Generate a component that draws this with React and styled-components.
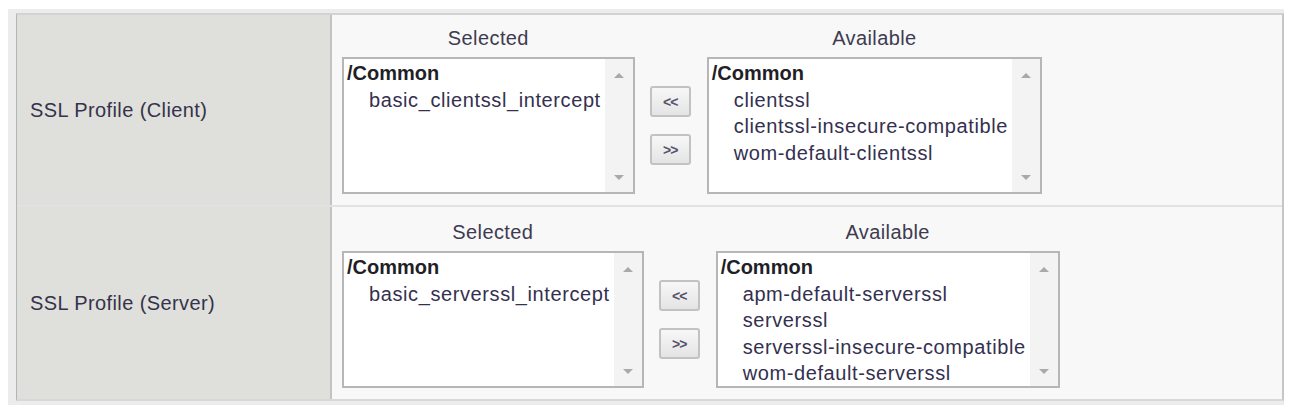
import styled, { createGlobalStyle } from "styled-components";

const GlobalStyle = createGlobalStyle`
    body {
        margin: 0;
        background: #ffffff;
        font-family: "Liberation Sans", Arial, sans-serif;
    }
`

const Frame = styled.div`
    margin: 9px 0 0 8px;
    width: 1276px;
    box-sizing: border-box;
    background: #ececec;
    padding: 4px 0 4px 8px;
`

const Table = styled.div`
    border-left: 1px solid #b4b4b4;
    border-right: 2px solid #c6c6c6;
    border-top: 2px solid #d2d2d2;
    border-bottom: 2px solid #d8d8d8;
`

const Row = styled.div`
    display: grid;
    grid-template-columns: 315px 1fr;
    height: ${p => p.h}px;
    & + & {
        border-top: 2px solid #e2e2e2;
    }
`

const Label = styled.div`
    background: #dfdfdc;
    border-right: 2px solid #c3c3c3;
    display: flex;
    align-items: center;
    padding-left: 13px;
    font-size: 20px;
    letter-spacing: 0.4px;
    color: #35334a;
`

const Content = styled.div`
    background: #f8f8f8;
    padding: ${p => p.top}px 10px 0 10px;
`

const Swap = styled.div`
    display: inline-grid;
    grid-template-columns: auto auto auto;
    grid-template-rows: 26px auto;
    row-gap: 6px;
`

const Heading = styled.div`
    text-align: center;
    font-size: 20px;
    line-height: 26px;
    letter-spacing: 0.4px;
    color: #3e3b50;
`

const Box = styled.div`
    display: flex;
    height: 137px;
    box-sizing: border-box;
    background: #ffffff;
    border: 2px solid #b6b6b6;
`

const List = styled.div`
    padding: 1px 4px 0 3px;
    font-size: 20px;
    line-height: 26.6px;
    color: #34304f;
    white-space: nowrap;
    overflow: hidden;
`

const Group = styled.div`
    font-weight: bold;
    color: #1f1f28;
`

const Item = styled.div`
    padding-left: 22px;
    letter-spacing: 0.6px;
`

const Scroll = styled.div`
    width: 28px;
    background: #f3f3f3;
    display: flex;
    flex-direction: column;
    justify-content: space-between;
    align-items: center;
    padding: 14px 0 12px;
`

const Arrow = styled.div`
    width: 0;
    height: 0;
    border-left: 5px solid transparent;
    border-right: 5px solid transparent;
    ${p => p.down
        ? "border-top: 5px solid #a9a9a9;"
        : "border-bottom: 5px solid #a9a9a9;"}
`

const Buttons = styled.div`
    grid-row: 2;
    grid-column: 2;
    display: flex;
    flex-direction: column;
    justify-content: center;
    gap: 17px;
    padding: 0 16px 0 15px;
`

const Button = styled.div`
    width: 41px;
    height: 31px;
    box-sizing: border-box;
    border: 2px solid #c2c2c2;
    border-radius: 3px;
    background: linear-gradient(#f7f7f7, #e4e4e4);
    display: flex;
    align-items: center;
    justify-content: center;
    font-size: 14px;
    font-weight: bold;
    color: #55536a;
    letter-spacing: -1px;
`

const ListBox = ({ items }) => (
    <Box>
        <List>
            <Group>/Common</Group>
            {items.map(i => <Item key={i}>{i}</Item>)}
        </List>
        <Scroll>
            <Arrow />
            <Arrow down />
        </Scroll>
    </Box>
)

const Profile = ({ label, selected, available, h, top }) => (
    <Row h={h}>
        <Label>{label}</Label>
        <Content top={top}>
            <Swap>
                <Heading>Selected</Heading>
                <span />
                <Heading>Available</Heading>
                <ListBox items={selected} />
                <Buttons>
                    <Button>&lt;&lt;</Button>
                    <Button>&gt;&gt;</Button>
                </Buttons>
                <ListBox items={available} />
            </Swap>
        </Content>
    </Row>
)

const App = () => {
    return (
        <>
            <GlobalStyle />
            <Frame>
                <Table>
                    <Profile
                        label="SSL Profile (Client)"
                        h={190}
                        top={10}
                        selected={["basic_clientssl_intercept"]}
                        available={["clientssl", "clientssl-insecure-compatible", "wom-default-clientssl"]}
                    />
                    <Profile
                        label="SSL Profile (Server)"
                        h={192}
                        top={12}
                        selected={["basic_serverssl_intercept"]}
                        available={["apm-default-serverssl", "serverssl", "serverssl-insecure-compatible", "wom-default-serverssl"]}
                    />
                </Table>
            </Frame>
        </>
    );
}
export default App;
